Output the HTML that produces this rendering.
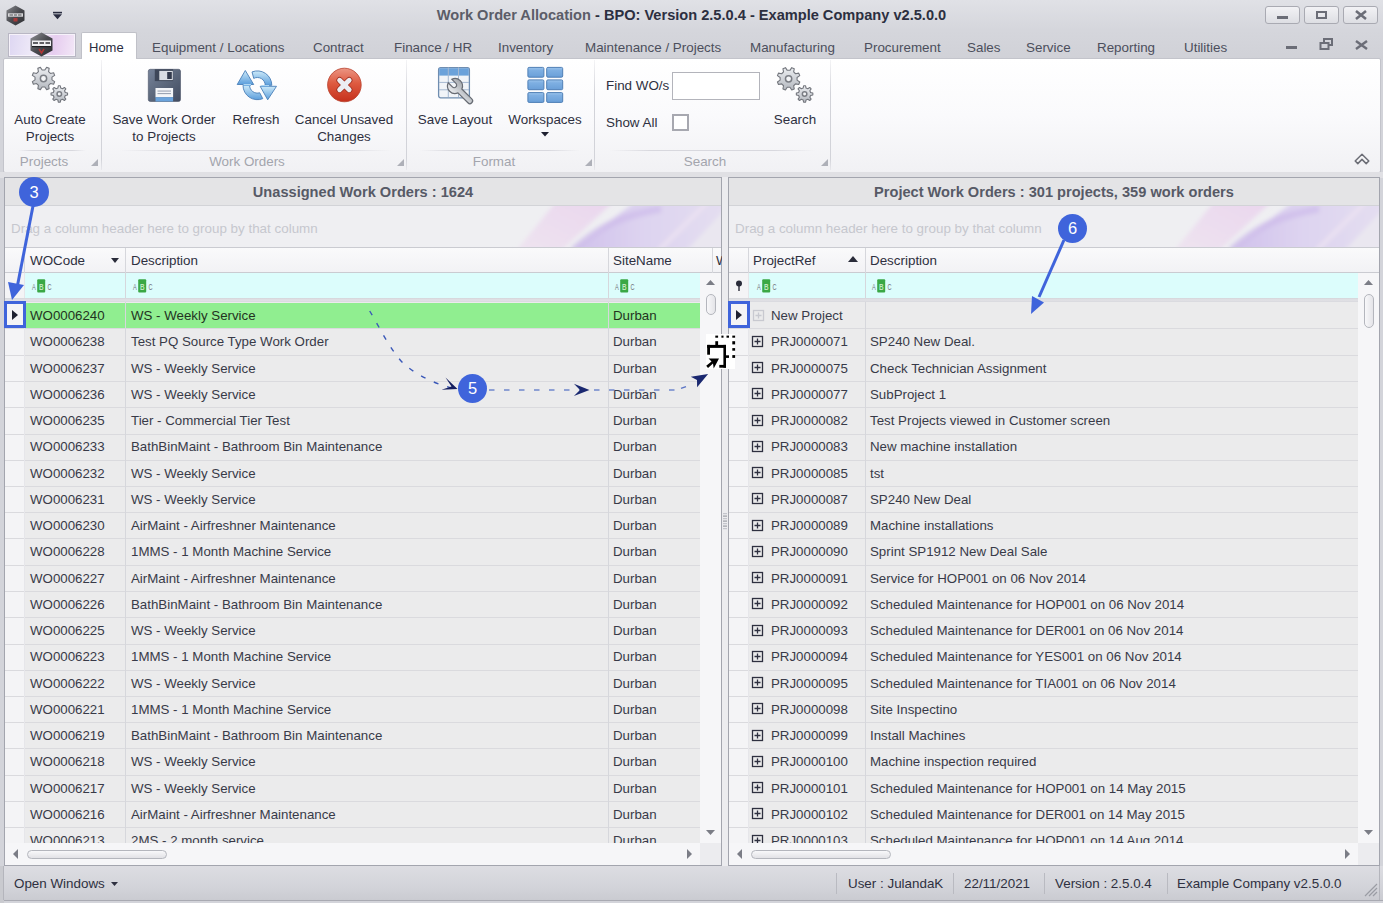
<!DOCTYPE html><html><head><meta charset="utf-8"><style>
html,body{margin:0;padding:0;}
body{width:1383px;height:903px;overflow:hidden;position:relative;background:#d3d4da;font-family:"Liberation Sans", sans-serif;}
.t{position:absolute;white-space:nowrap;line-height:1;}
.b{position:absolute;box-sizing:border-box;}
svg{position:absolute;overflow:visible;}
</style></head><body>
<div class="b" style="left:0px;top:0px;width:1383px;height:60px;background:linear-gradient(#e0e1e6 0px,#d5d6dc 30px,#d0d1d7 60px);"></div>
<svg style="left:6px;top:5px" width="19" height="21" viewBox="0 0 19 21"><defs><linearGradient id="hx" x1="0" y1="0" x2="1" y2="1"><stop offset="0" stop-color="#8a8b90"/><stop offset="0.5" stop-color="#4a4b50"/><stop offset="1" stop-color="#2e2f33"/></linearGradient></defs><polygon points="9.5,0.5 18.5,5.5 18.5,15.5 9.5,20.5 0.5,15.5 0.5,5.5" fill="url(#hx)"/><rect x="2" y="8.3" width="15" height="3.4" fill="#d8d8da"/><path d="M3.5,10 H7 M8,10 H11 M12,10 H15.5" stroke="#55565a" stroke-width="1"/><rect x="7.5" y="13" width="4" height="3.5" fill="#a83a3a"/></svg>
<svg style="left:53px;top:11px" width="10" height="10" viewBox="0 0 10 10"><rect x="0" y="0.8" width="9" height="1.6" fill="#2a2d40"/><polygon points="0,3.2 9,3.2 4.5,8.3" fill="#2a2d40"/></svg>
<div class="t" style="left:0;width:1383px;text-align:center;top:8px;font-size:14.6px;font-weight:bold;color:#5b5d68;"><span>Work Order Allocation</span><span style="color:#2c2f40"> - BPO: Version 2.5.0.4 - Example Company v2.5.0.0</span></div>
<div class="b" style="left:1265px;top:6px;width:35px;height:18px;border:1px solid #a9aab2;border-radius:3px;background:linear-gradient(#f2f2f5,#dddee3);"></div>
<div class="b" style="left:1277px;top:16px;width:11px;height:3px;background:#6b6d77;"></div>
<div class="b" style="left:1304px;top:6px;width:35px;height:18px;border:1px solid #a9aab2;border-radius:3px;background:linear-gradient(#f2f2f5,#dddee3);"></div>
<div class="b" style="left:1316px;top:10.5px;width:11px;height:8.5px;border:2px solid #6b6d77;"></div>
<div class="b" style="left:1343px;top:6px;width:35px;height:18px;border:1px solid #a9aab2;border-radius:3px;background:linear-gradient(#f2f2f5,#dddee3);"></div>
<svg style="left:1355px;top:10px" width="12" height="10" viewBox="0 0 12 10"><path d="M1,1 L11,9 M11,1 L1,9" stroke="#6b6d77" stroke-width="2.6"/></svg>
<div class="b" style="left:8px;top:33px;width:68px;height:24px;border:1px solid #b9b7c4;box-shadow:inset 0 0 0 1px #f6f2fa;background:linear-gradient(100deg,#ddd6f2 0%,#efeaf8 38%,#e6cdef 68%,#f3e8f7 100%);"></div>
<svg style="left:30px;top:32px" width="23" height="25" viewBox="0 0 23 25"><defs><linearGradient id="hx2" x1="0" y1="0" x2="1" y2="1"><stop offset="0" stop-color="#909196"/><stop offset="0.5" stop-color="#4a4b50"/><stop offset="1" stop-color="#2a2b2f"/></linearGradient></defs><polygon points="11.5,0.5 22.5,6.5 22.5,18.5 11.5,24.5 0.5,18.5 0.5,6.5" fill="url(#hx2)"/><rect x="2" y="8.5" width="19" height="5.5" fill="#f0f0f2"/><path d="M3,11 H8 M9.5,11 H14 M15.5,11 H20" stroke="#303136" stroke-width="1.4"/><rect x="2" y="14" width="19" height="1.2" fill="#1e1f22"/><path d="M9,17 L11.5,21 L14,17" fill="none" stroke="#b03535" stroke-width="1.6"/></svg>
<div class="b" style="left:81px;top:32px;width:56px;height:28px;background:#fff;border:1px solid #c0c1c8;border-bottom:none;border-radius:2px 2px 0 0;"></div>
<div class="t" style="left:89px;top:41px;font-size:13px;color:#2a2d40;font-weight:normal;">Home</div>
<div class="t" style="left:152px;top:41px;font-size:13.4px;color:#4c4f5c;font-weight:normal;">Equipment / Locations</div>
<div class="t" style="left:313px;top:41px;font-size:13.4px;color:#4c4f5c;font-weight:normal;">Contract</div>
<div class="t" style="left:394px;top:41px;font-size:13.4px;color:#4c4f5c;font-weight:normal;">Finance / HR</div>
<div class="t" style="left:498px;top:41px;font-size:13.4px;color:#4c4f5c;font-weight:normal;">Inventory</div>
<div class="t" style="left:585px;top:41px;font-size:13.4px;color:#4c4f5c;font-weight:normal;">Maintenance / Projects</div>
<div class="t" style="left:750px;top:41px;font-size:13.4px;color:#4c4f5c;font-weight:normal;">Manufacturing</div>
<div class="t" style="left:864px;top:41px;font-size:13.4px;color:#4c4f5c;font-weight:normal;">Procurement</div>
<div class="t" style="left:967px;top:41px;font-size:13.4px;color:#4c4f5c;font-weight:normal;">Sales</div>
<div class="t" style="left:1026px;top:41px;font-size:13.4px;color:#4c4f5c;font-weight:normal;">Service</div>
<div class="t" style="left:1097px;top:41px;font-size:13.4px;color:#4c4f5c;font-weight:normal;">Reporting</div>
<div class="t" style="left:1184px;top:41px;font-size:13.4px;color:#4c4f5c;font-weight:normal;">Utilities</div>
<div class="b" style="left:1286px;top:46px;width:11px;height:3px;background:#6b6d77;"></div>
<svg style="left:1319px;top:38px" width="15" height="13" viewBox="0 0 15 13"><rect x="5" y="1" width="8" height="6" fill="none" stroke="#6b6d77" stroke-width="2"/><rect x="1.5" y="5" width="8" height="6" fill="#d2d3d9" stroke="#6b6d77" stroke-width="2"/></svg>
<svg style="left:1355px;top:40px" width="13" height="10" viewBox="0 0 13 10"><path d="M1,1 L12,9 M12,1 L1,9" stroke="#6b6d77" stroke-width="2.4"/></svg>
<div class="b" style="left:3px;top:58px;width:1378px;height:115px;background:linear-gradient(#ffffff 0%,#fafafc 50%,#f1f1f4 100%);border:1px solid #c3c4cb;border-radius:2px;"></div>
<div class="b" style="left:82px;top:57px;width:54px;height:3px;background:#fff;"></div>
<div class="b" style="left:101px;top:60px;width:1px;height:110px;background:linear-gradient(#f4f4f6,#d2d3d9 30%,#d2d3d9 90%,#e8e8ec);"></div>
<div class="b" style="left:406px;top:60px;width:1px;height:110px;background:linear-gradient(#f4f4f6,#d2d3d9 30%,#d2d3d9 90%,#e8e8ec);"></div>
<div class="b" style="left:594px;top:60px;width:1px;height:110px;background:linear-gradient(#f4f4f6,#d2d3d9 30%,#d2d3d9 90%,#e8e8ec);"></div>
<div class="b" style="left:830px;top:60px;width:1px;height:110px;background:linear-gradient(#f4f4f6,#d2d3d9 30%,#d2d3d9 90%,#e8e8ec);"></div>
<div class="b" style="left:18px;top:150px;width:68px;height:1px;background:linear-gradient(90deg,rgba(215,215,222,0),#d8d8de 20%,#d8d8de 80%,rgba(215,215,222,0));"></div>
<div class="b" style="left:120px;top:150px;width:272px;height:1px;background:linear-gradient(90deg,rgba(215,215,222,0),#d8d8de 20%,#d8d8de 80%,rgba(215,215,222,0));"></div>
<div class="b" style="left:420px;top:150px;width:160px;height:1px;background:linear-gradient(90deg,rgba(215,215,222,0),#d8d8de 20%,#d8d8de 80%,rgba(215,215,222,0));"></div>
<div class="b" style="left:610px;top:150px;width:205px;height:1px;background:linear-gradient(90deg,rgba(215,215,222,0),#d8d8de 20%,#d8d8de 80%,rgba(215,215,222,0));"></div>
<div class="t" style="left:-256px;width:600px;text-align:center;top:155px;font-size:13.4px;color:#a3a5ad;font-weight:normal;">Projects</div>
<div class="t" style="left:-53px;width:600px;text-align:center;top:155px;font-size:13.4px;color:#a3a5ad;font-weight:normal;">Work Orders</div>
<div class="t" style="left:194px;width:600px;text-align:center;top:155px;font-size:13.4px;color:#a3a5ad;font-weight:normal;">Format</div>
<div class="t" style="left:405px;width:600px;text-align:center;top:155px;font-size:13.4px;color:#a3a5ad;font-weight:normal;">Search</div>
<svg style="left:91px;top:159px" width="7" height="7" viewBox="0 0 7 7"><polygon points="7,0 7,7 0,7" fill="#aeb0b8"/></svg>
<svg style="left:397px;top:159px" width="7" height="7" viewBox="0 0 7 7"><polygon points="7,0 7,7 0,7" fill="#aeb0b8"/></svg>
<svg style="left:585px;top:159px" width="7" height="7" viewBox="0 0 7 7"><polygon points="7,0 7,7 0,7" fill="#aeb0b8"/></svg>
<svg style="left:821px;top:159px" width="7" height="7" viewBox="0 0 7 7"><polygon points="7,0 7,7 0,7" fill="#aeb0b8"/></svg>
<div class="t" style="left:-250px;width:600px;text-align:center;top:113px;font-size:13.4px;color:#2e3040;font-weight:normal;">Auto Create</div>
<div class="t" style="left:-250px;width:600px;text-align:center;top:130px;font-size:13.4px;color:#2e3040;font-weight:normal;">Projects</div>
<div class="t" style="left:-136px;width:600px;text-align:center;top:113px;font-size:13.4px;color:#2e3040;font-weight:normal;">Save Work Order</div>
<div class="t" style="left:-136px;width:600px;text-align:center;top:130px;font-size:13.4px;color:#2e3040;font-weight:normal;">to Projects</div>
<div class="t" style="left:-44px;width:600px;text-align:center;top:113px;font-size:13.4px;color:#2e3040;font-weight:normal;">Refresh</div>
<div class="t" style="left:44px;width:600px;text-align:center;top:113px;font-size:13.4px;color:#2e3040;font-weight:normal;">Cancel Unsaved</div>
<div class="t" style="left:44px;width:600px;text-align:center;top:130px;font-size:13.4px;color:#2e3040;font-weight:normal;">Changes</div>
<div class="t" style="left:155px;width:600px;text-align:center;top:113px;font-size:13.4px;color:#2e3040;font-weight:normal;">Save Layout</div>
<div class="t" style="left:245px;width:600px;text-align:center;top:113px;font-size:13.4px;color:#2e3040;font-weight:normal;">Workspaces</div>
<svg style="left:541px;top:132px" width="8" height="5" viewBox="0 0 8 5"><polygon points="0,0 8,0 4,4.5" fill="#1e2030"/></svg>
<div class="t" style="left:606px;top:79px;font-size:13.4px;color:#2e3040;font-weight:normal;">Find WO/s</div>
<div class="b" style="left:672px;top:72px;width:88px;height:28px;background:#fff;border:1px solid #b3b4bb;"></div>
<div class="t" style="left:606px;top:116px;font-size:13.4px;color:#2e3040;font-weight:normal;">Show All</div>
<div class="b" style="left:672px;top:114px;width:17px;height:17px;background:#fff;border:2px solid #a7a8b0;"></div>
<div class="t" style="left:495px;width:600px;text-align:center;top:113px;font-size:13.4px;color:#2e3040;font-weight:normal;">Search</div>
<svg style="left:1354px;top:152px" width="17" height="14" viewBox="0 0 17 14"><path d="M1.2,9 L8,2.2 L14.8,9 L12.2,11.6 L8,7.4 L3.8,11.6 Z" fill="#f4f4f6" stroke="#6c6e76" stroke-width="1.5" stroke-linejoin="round"/></svg>
<svg style="left:30px;top:65px" width="40" height="40" viewBox="0 0 40 40"><defs><linearGradient id="gg" x1="0" y1="0" x2="0" y2="1"><stop offset="0" stop-color="#eceef1"/><stop offset="1" stop-color="#b4b8bf"/></linearGradient></defs><polygon points="14.84,5.02 16.65,2.34 19.17,3.38 18.55,6.56 20.44,8.45 23.62,7.83 24.66,10.35 21.98,12.16 21.98,14.84 24.66,16.65 23.62,19.17 20.44,18.55 18.55,20.44 19.17,23.62 16.65,24.66 14.84,21.98 12.16,21.98 10.35,24.66 7.83,23.62 8.45,20.44 6.56,18.55 3.38,19.17 2.34,16.65 5.02,14.84 5.02,12.16 2.34,10.35 3.38,7.83 6.56,8.45 8.45,6.56 7.83,3.38 10.35,2.34 12.16,5.02" fill="url(#gg)" stroke="#73767d" stroke-width="1.1" stroke-linejoin="round"/><circle cx="13.5" cy="13.5" r="3.13" fill="#f4f5f7" stroke="#7a7d84" stroke-width="1.5"/><polygon points="27.87,23.03 28.32,20.76 30.28,20.76 30.73,23.03 32.51,23.76 34.44,22.48 35.82,23.86 34.54,25.79 35.27,27.57 37.54,28.02 37.54,29.98 35.27,30.43 34.54,32.21 35.82,34.14 34.44,35.52 32.51,34.24 30.73,34.97 30.28,37.24 28.32,37.24 27.87,34.97 26.09,34.24 24.16,35.52 22.78,34.14 24.06,32.21 23.33,30.43 21.06,29.98 21.06,28.02 23.33,27.57 24.06,25.79 22.78,23.86 24.16,22.48 26.09,23.76" fill="url(#gg)" stroke="#73767d" stroke-width="1.1" stroke-linejoin="round"/><circle cx="29.3" cy="29" r="2.24" fill="#f4f5f7" stroke="#7a7d84" stroke-width="1.5"/></svg>
<svg style="left:775px;top:65px" width="40" height="40" viewBox="0 0 40 40"><defs><linearGradient id="gg" x1="0" y1="0" x2="0" y2="1"><stop offset="0" stop-color="#eceef1"/><stop offset="1" stop-color="#b4b8bf"/></linearGradient></defs><polygon points="14.94,5.32 16.75,2.64 19.27,3.68 18.65,6.86 20.54,8.75 23.72,8.13 24.76,10.65 22.08,12.46 22.08,15.14 24.76,16.95 23.72,19.47 20.54,18.85 18.65,20.74 19.27,23.92 16.75,24.96 14.94,22.28 12.26,22.28 10.45,24.96 7.93,23.92 8.55,20.74 6.66,18.85 3.48,19.47 2.44,16.95 5.12,15.14 5.12,12.46 2.44,10.65 3.48,8.13 6.66,8.75 8.55,6.86 7.93,3.68 10.45,2.64 12.26,5.32" fill="url(#gg)" stroke="#73767d" stroke-width="1.1" stroke-linejoin="round"/><circle cx="13.6" cy="13.8" r="3.13" fill="#f4f5f7" stroke="#7a7d84" stroke-width="1.5"/><polygon points="28.17,23.03 28.62,20.76 30.58,20.76 31.03,23.03 32.81,23.76 34.74,22.48 36.12,23.86 34.84,25.79 35.57,27.57 37.84,28.02 37.84,29.98 35.57,30.43 34.84,32.21 36.12,34.14 34.74,35.52 32.81,34.24 31.03,34.97 30.58,37.24 28.62,37.24 28.17,34.97 26.39,34.24 24.46,35.52 23.08,34.14 24.36,32.21 23.63,30.43 21.36,29.98 21.36,28.02 23.63,27.57 24.36,25.79 23.08,23.86 24.46,22.48 26.39,23.76" fill="url(#gg)" stroke="#73767d" stroke-width="1.1" stroke-linejoin="round"/><circle cx="29.6" cy="29" r="2.24" fill="#f4f5f7" stroke="#7a7d84" stroke-width="1.5"/></svg>
<svg style="left:148px;top:69px" width="34" height="33" viewBox="0 0 34 33"><defs><linearGradient id="fg" x1="0" y1="0" x2="1" y2="1"><stop offset="0" stop-color="#76839a"/><stop offset="0.5" stop-color="#5b677b"/><stop offset="1" stop-color="#414b60"/></linearGradient></defs><rect x="0.3" y="0.3" width="32.2" height="32.2" rx="2" fill="url(#fg)" stroke="#4a5366" stroke-width="0.6"/><rect x="6.8" y="0.3" width="18.3" height="11.8" fill="#3e4759"/><rect x="11.3" y="1.9" width="13.5" height="9.2" fill="#d9dde3"/><rect x="19.2" y="3" width="4.6" height="7" fill="#323a4c"/><rect x="7.5" y="19" width="17.6" height="9.3" fill="#f3f5f8"/><rect x="7.5" y="28.2" width="17.6" height="4.3" fill="#6aa3dc"/><rect x="9.5" y="21.6" width="13.5" height="0.9" fill="#8792a4"/><rect x="9.5" y="24.2" width="13.5" height="0.9" fill="#8792a4"/></svg>
<svg style="left:235px;top:69px" width="44" height="33" viewBox="0 0 44 33"><defs><linearGradient id="rg" x1="0" y1="0" x2="0" y2="1"><stop offset="0" stop-color="#cdeaf9"/><stop offset="1" stop-color="#5b9edc"/></linearGradient></defs><g fill="url(#rg)" stroke="#4a7fb8" stroke-width="0.9" stroke-linejoin="round"><path d="M17.01,2.95 A14.4,14.4 0 0 1 36.80,16.30 L30.20,16.30 A7.8,7.8 0 0 0 18.74,9.41 Z"/><path d="M25.2,17.3 L41.5,17.3 L32.7,30.8 Z"/><path d="M8.00,16.30 A14.4,14.4 0 0 0 27.79,29.65 L24.68,23.76 A7.8,7.8 0 0 1 14.60,16.30 Z"/><path d="M2.2,15.5 L10.3,1.5 L18.7,15.5 Z"/></g><g fill="url(#rg)"><path d="M26.3,17.8 L34,17.8 L34,16 L26.3,16 Z"/><path d="M8.5,15 L16,15 L16,17 L8.5,17 Z"/></g></svg>
<svg style="left:327px;top:68px" width="36" height="36" viewBox="0 0 36 36"><defs><linearGradient id="cg" x1="0" y1="0" x2="0" y2="1"><stop offset="0" stop-color="#eb9583"/><stop offset="0.45" stop-color="#de5a40"/><stop offset="1" stop-color="#c5301c"/></linearGradient></defs><circle cx="17.4" cy="17" r="16.8" fill="url(#cg)" stroke="#b8402c" stroke-width="0.8"/><path d="M12.6,12.2 L22.2,21.8 M22.2,12.2 L12.6,21.8" stroke="#a03020" stroke-width="6.4" stroke-linecap="round"/><path d="M12.6,12.2 L22.2,21.8 M22.2,12.2 L12.6,21.8" stroke="#eceef3" stroke-width="4.8" stroke-linecap="round"/></svg>
<svg style="left:437px;top:66px" width="44" height="44" viewBox="0 0 44 44"><defs><linearGradient id="wg" x1="0" y1="0" x2="1" y2="0"><stop offset="0" stop-color="#eceef1"/><stop offset="1" stop-color="#a4a8ae"/></linearGradient></defs><rect x="1.6" y="1.6" width="30.8" height="30.2" rx="2" fill="#f1f4f8" stroke="#6f8db0" stroke-width="1.3"/><rect x="2.2" y="2.2" width="29.6" height="7.4" fill="#6ba2da"/><path d="M11.3,1.5 V31 M21.5,1.5 V31 M2,16.4 H32 M2,23.8 H32" stroke="#a5b8d0" stroke-width="1"/><path transform="translate(18,20) rotate(-45)" d="M-2.5,-7.07 L-2.5,-1.2 A2.5,2.5 0 0 0 2.5,-1.2 L2.5,-7.07 A7.5,7.5 0 0 1 2.75,6.98 L2.75,21 A2.75,2.75 0 0 1 -2.75,21 L-2.75,6.98 A7.5,7.5 0 0 1 -2.5,-7.07 Z" fill="url(#wg)" stroke="#676b73" stroke-width="1.2"/></svg>
<svg style="left:527px;top:66px" width="37" height="38" viewBox="0 0 37 38"><defs><linearGradient id="wsg" x1="0" y1="0" x2="0" y2="1"><stop offset="0" stop-color="#9cc4ec"/><stop offset="0.3" stop-color="#7eafe2"/><stop offset="1" stop-color="#6a9fd8"/></linearGradient></defs><rect x="0.9" y="1.4" width="16" height="9.8" rx="1.2" fill="url(#wsg)" stroke="#4f7fb6" stroke-width="1"/><rect x="19.7" y="1.4" width="16" height="9.8" rx="1.2" fill="url(#wsg)" stroke="#4f7fb6" stroke-width="1"/><rect x="0.9" y="13.9" width="16" height="9.8" rx="1.2" fill="url(#wsg)" stroke="#4f7fb6" stroke-width="1"/><rect x="19.7" y="13.9" width="16" height="9.8" rx="1.2" fill="url(#wsg)" stroke="#4f7fb6" stroke-width="1"/><rect x="0.9" y="26.6" width="16" height="9.8" rx="1.2" fill="url(#wsg)" stroke="#4f7fb6" stroke-width="1"/><rect x="19.7" y="26.6" width="16" height="9.8" rx="1.2" fill="url(#wsg)" stroke="#4f7fb6" stroke-width="1"/></svg>
<div class="b" style="left:0px;top:172px;width:1383px;height:6px;background:#e0e0e4;"></div>
<div class="b" style="left:4px;top:177px;width:718px;height:689px;background:#f4f4f6;border:1px solid #a3a5ae;"></div>
<div class="b" style="left:5px;top:178px;width:716px;height:28px;background:#e4e4e6;border-bottom:1px solid #d2d3d7;"></div>
<div class="t" style="left:63.0px;width:600px;text-align:center;top:185px;font-size:14.6px;color:#575a66;font-weight:bold;">Unassigned Work Orders : 1624</div>
<div class="b" style="left:5px;top:206px;width:716px;height:42px;background:#efeff2;border-bottom:1px solid #cacbd1;"></div>
<svg style="left:5px;top:206px" width="716" height="41" viewBox="0 0 716 41"><defs><clipPath id="cpL"><rect x="0" y="0" width="716" height="41"/></clipPath><filter id="blL" x="-50%" y="-50%" width="200%" height="200%"><feGaussianBlur stdDeviation="2"/></filter><linearGradient id="pkL" x1="0" y1="1" x2="1" y2="0"><stop offset="0" stop-color="#eee4f0"/><stop offset="1" stop-color="#ead6ee"/></linearGradient><linearGradient id="pgL" x1="0" y1="0" x2="1" y2="0"><stop offset="0" stop-color="#cfc0eb"/><stop offset="0.45" stop-color="#ddd3f0"/><stop offset="1" stop-color="#e4def0"/></linearGradient></defs><g clip-path="url(#cpL)"><g filter="url(#blL)"><polygon points="511,45 556,45 608,-4 551,-4" fill="url(#pkL)"/><polygon points="566,45 630,-4 722,-4 722,45" fill="url(#pgL)"/><path d="M568,44 C591,23 616,9 656,3" fill="none" stroke="#cdbbe9" stroke-width="7" opacity="0.7"/><path d="M654,44 L702,-3" fill="none" stroke="#ebe2f2" stroke-width="4"/><polygon points="681,45 722,45 722,1" fill="#eae7f0"/></g></g></svg>
<div class="t" style="left:11px;top:222px;font-size:13.4px;color:#c6c7ce;font-weight:normal;">Drag a column header here to group by that column</div>
<div class="b" style="left:5px;top:248px;width:716px;height:25px;background:linear-gradient(#fafafb,#f2f2f5);border-bottom:1px solid #cacbd1;"></div>
<div class="b" style="left:5px;top:273px;width:695px;height:25px;background:#dcfdfc;"></div>
<div class="b" style="left:5px;top:302px;width:695px;height:541px;background:#ebebec;"></div>
<div class="b" style="left:5px;top:302px;width:20px;height:541px;background:#f4f4f6;"></div>
<div class="b" style="left:700px;top:273px;width:21px;height:570px;background:#f6f6f8;"></div>
<div class="b" style="left:700px;top:843px;width:21px;height:22px;background:#ececef;"></div>
<div class="b" style="left:5px;top:843px;width:695px;height:22px;background:#f6f6f8;"></div>
<div class="b" style="left:5px;top:273px;width:20px;height:25px;background:#f4f4f6;"></div>
<div class="b" style="left:5px;top:302px;width:695px;height:541px;overflow:hidden;">
<div class="b" style="left:20px;top:0.5px;width:675px;height:26.5px;background:#90ee90;"></div>
<div class="b" style="left:0;top:26px;width:695px;height:1px;background:#dadade;"></div>
<div class="t" style="left:25px;top:7.2px;font-size:13.3px;color:#23331f;">WO0006240</div>
<div class="t" style="left:126px;top:7.2px;font-size:13.3px;color:#23331f;">WS - Weekly Service</div>
<div class="t" style="left:608px;top:7.2px;font-size:13.3px;color:#23331f;">Durban</div>
<div class="b" style="left:0;top:53px;width:695px;height:1px;background:#dadade;"></div>
<div class="t" style="left:25px;top:33.45px;font-size:13.3px;color:#383a48;">WO0006238</div>
<div class="t" style="left:126px;top:33.45px;font-size:13.3px;color:#383a48;">Test PQ Source Type Work Order</div>
<div class="t" style="left:608px;top:33.45px;font-size:13.3px;color:#383a48;">Durban</div>
<div class="b" style="left:0;top:79px;width:695px;height:1px;background:#dadade;"></div>
<div class="t" style="left:25px;top:59.7px;font-size:13.3px;color:#383a48;">WO0006237</div>
<div class="t" style="left:126px;top:59.7px;font-size:13.3px;color:#383a48;">WS - Weekly Service</div>
<div class="t" style="left:608px;top:59.7px;font-size:13.3px;color:#383a48;">Durban</div>
<div class="b" style="left:0;top:105px;width:695px;height:1px;background:#dadade;"></div>
<div class="t" style="left:25px;top:85.95px;font-size:13.3px;color:#383a48;">WO0006236</div>
<div class="t" style="left:126px;top:85.95px;font-size:13.3px;color:#383a48;">WS - Weekly Service</div>
<div class="t" style="left:608px;top:85.95px;font-size:13.3px;color:#383a48;">Durban</div>
<div class="b" style="left:0;top:132px;width:695px;height:1px;background:#dadade;"></div>
<div class="t" style="left:25px;top:112.2px;font-size:13.3px;color:#383a48;">WO0006235</div>
<div class="t" style="left:126px;top:112.2px;font-size:13.3px;color:#383a48;">Tier - Commercial Tier Test</div>
<div class="t" style="left:608px;top:112.2px;font-size:13.3px;color:#383a48;">Durban</div>
<div class="b" style="left:0;top:158px;width:695px;height:1px;background:#dadade;"></div>
<div class="t" style="left:25px;top:138.45px;font-size:13.3px;color:#383a48;">WO0006233</div>
<div class="t" style="left:126px;top:138.45px;font-size:13.3px;color:#383a48;">BathBinMaint - Bathroom Bin Maintenance</div>
<div class="t" style="left:608px;top:138.45px;font-size:13.3px;color:#383a48;">Durban</div>
<div class="b" style="left:0;top:184px;width:695px;height:1px;background:#dadade;"></div>
<div class="t" style="left:25px;top:164.7px;font-size:13.3px;color:#383a48;">WO0006232</div>
<div class="t" style="left:126px;top:164.7px;font-size:13.3px;color:#383a48;">WS - Weekly Service</div>
<div class="t" style="left:608px;top:164.7px;font-size:13.3px;color:#383a48;">Durban</div>
<div class="b" style="left:0;top:210px;width:695px;height:1px;background:#dadade;"></div>
<div class="t" style="left:25px;top:190.95px;font-size:13.3px;color:#383a48;">WO0006231</div>
<div class="t" style="left:126px;top:190.95px;font-size:13.3px;color:#383a48;">WS - Weekly Service</div>
<div class="t" style="left:608px;top:190.95px;font-size:13.3px;color:#383a48;">Durban</div>
<div class="b" style="left:0;top:236px;width:695px;height:1px;background:#dadade;"></div>
<div class="t" style="left:25px;top:217.2px;font-size:13.3px;color:#383a48;">WO0006230</div>
<div class="t" style="left:126px;top:217.2px;font-size:13.3px;color:#383a48;">AirMaint - Airfreshner Maintenance</div>
<div class="t" style="left:608px;top:217.2px;font-size:13.3px;color:#383a48;">Durban</div>
<div class="b" style="left:0;top:263px;width:695px;height:1px;background:#dadade;"></div>
<div class="t" style="left:25px;top:243.45px;font-size:13.3px;color:#383a48;">WO0006228</div>
<div class="t" style="left:126px;top:243.45px;font-size:13.3px;color:#383a48;">1MMS - 1 Month Machine Service</div>
<div class="t" style="left:608px;top:243.45px;font-size:13.3px;color:#383a48;">Durban</div>
<div class="b" style="left:0;top:289px;width:695px;height:1px;background:#dadade;"></div>
<div class="t" style="left:25px;top:269.7px;font-size:13.3px;color:#383a48;">WO0006227</div>
<div class="t" style="left:126px;top:269.7px;font-size:13.3px;color:#383a48;">AirMaint - Airfreshner Maintenance</div>
<div class="t" style="left:608px;top:269.7px;font-size:13.3px;color:#383a48;">Durban</div>
<div class="b" style="left:0;top:315px;width:695px;height:1px;background:#dadade;"></div>
<div class="t" style="left:25px;top:295.95px;font-size:13.3px;color:#383a48;">WO0006226</div>
<div class="t" style="left:126px;top:295.95px;font-size:13.3px;color:#383a48;">BathBinMaint - Bathroom Bin Maintenance</div>
<div class="t" style="left:608px;top:295.95px;font-size:13.3px;color:#383a48;">Durban</div>
<div class="b" style="left:0;top:342px;width:695px;height:1px;background:#dadade;"></div>
<div class="t" style="left:25px;top:322.2px;font-size:13.3px;color:#383a48;">WO0006225</div>
<div class="t" style="left:126px;top:322.2px;font-size:13.3px;color:#383a48;">WS - Weekly Service</div>
<div class="t" style="left:608px;top:322.2px;font-size:13.3px;color:#383a48;">Durban</div>
<div class="b" style="left:0;top:368px;width:695px;height:1px;background:#dadade;"></div>
<div class="t" style="left:25px;top:348.45px;font-size:13.3px;color:#383a48;">WO0006223</div>
<div class="t" style="left:126px;top:348.45px;font-size:13.3px;color:#383a48;">1MMS - 1 Month Machine Service</div>
<div class="t" style="left:608px;top:348.45px;font-size:13.3px;color:#383a48;">Durban</div>
<div class="b" style="left:0;top:394px;width:695px;height:1px;background:#dadade;"></div>
<div class="t" style="left:25px;top:374.7px;font-size:13.3px;color:#383a48;">WO0006222</div>
<div class="t" style="left:126px;top:374.7px;font-size:13.3px;color:#383a48;">WS - Weekly Service</div>
<div class="t" style="left:608px;top:374.7px;font-size:13.3px;color:#383a48;">Durban</div>
<div class="b" style="left:0;top:420px;width:695px;height:1px;background:#dadade;"></div>
<div class="t" style="left:25px;top:400.95px;font-size:13.3px;color:#383a48;">WO0006221</div>
<div class="t" style="left:126px;top:400.95px;font-size:13.3px;color:#383a48;">1MMS - 1 Month Machine Service</div>
<div class="t" style="left:608px;top:400.95px;font-size:13.3px;color:#383a48;">Durban</div>
<div class="b" style="left:0;top:446px;width:695px;height:1px;background:#dadade;"></div>
<div class="t" style="left:25px;top:427.2px;font-size:13.3px;color:#383a48;">WO0006219</div>
<div class="t" style="left:126px;top:427.2px;font-size:13.3px;color:#383a48;">BathBinMaint - Bathroom Bin Maintenance</div>
<div class="t" style="left:608px;top:427.2px;font-size:13.3px;color:#383a48;">Durban</div>
<div class="b" style="left:0;top:473px;width:695px;height:1px;background:#dadade;"></div>
<div class="t" style="left:25px;top:453.45px;font-size:13.3px;color:#383a48;">WO0006218</div>
<div class="t" style="left:126px;top:453.45px;font-size:13.3px;color:#383a48;">WS - Weekly Service</div>
<div class="t" style="left:608px;top:453.45px;font-size:13.3px;color:#383a48;">Durban</div>
<div class="b" style="left:0;top:499px;width:695px;height:1px;background:#dadade;"></div>
<div class="t" style="left:25px;top:479.7px;font-size:13.3px;color:#383a48;">WO0006217</div>
<div class="t" style="left:126px;top:479.7px;font-size:13.3px;color:#383a48;">WS - Weekly Service</div>
<div class="t" style="left:608px;top:479.7px;font-size:13.3px;color:#383a48;">Durban</div>
<div class="b" style="left:0;top:525px;width:695px;height:1px;background:#dadade;"></div>
<div class="t" style="left:25px;top:505.95px;font-size:13.3px;color:#383a48;">WO0006216</div>
<div class="t" style="left:126px;top:505.95px;font-size:13.3px;color:#383a48;">AirMaint - Airfreshner Maintenance</div>
<div class="t" style="left:608px;top:505.95px;font-size:13.3px;color:#383a48;">Durban</div>
<div class="b" style="left:0;top:552px;width:695px;height:1px;background:#dadade;"></div>
<div class="t" style="left:25px;top:532.2px;font-size:13.3px;color:#383a48;">WO0006213</div>
<div class="t" style="left:126px;top:532.2px;font-size:13.3px;color:#383a48;">2MS - 2 month service</div>
<div class="t" style="left:608px;top:532.2px;font-size:13.3px;color:#383a48;">Durban</div>
</div>
<div class="b" style="left:125px;top:248px;width:1px;height:595px;background:#d6d7dc;"></div>
<div class="b" style="left:608px;top:248px;width:1px;height:595px;background:#d6d7dc;"></div>
<div class="b" style="left:712px;top:248px;width:1px;height:25px;background:#d6d7dc;"></div>
<div class="b" style="left:24px;top:248px;width:1px;height:25px;background:#d6d7dc;"></div>
<div class="b" style="left:24px;top:273px;width:1px;height:570px;background:#e6e6ea;"></div>
<div class="b" style="left:5px;top:298px;width:695px;height:4px;background:linear-gradient(#d4d5da,#e2e2e6 50%,#d8d9de);"></div>
<div class="t" style="left:30px;top:254px;font-size:13.4px;color:#2e3040;font-weight:normal;">WOCode</div>
<div class="t" style="left:131px;top:254px;font-size:13.4px;color:#2e3040;font-weight:normal;">Description</div>
<div class="t" style="left:613px;top:254px;font-size:13.4px;color:#2e3040;font-weight:normal;">SiteName</div>
<div class="t" style="left:716px;top:254px;font-size:13.4px;color:#2e3040;font-weight:normal;">W</div>
<svg style="left:31px;top:281px" width="20" height="11" viewBox="0 0 20 11"><g font-family="Liberation Sans" font-size="9" transform="scale(0.62,1)"><text x="1.5" y="9.3" fill="#70727a">A</text><text x="26.5" y="9.3" fill="#70727a">C</text></g><rect x="6.2" y="-1.8" width="8" height="13.3" rx="1" fill="#3aa845"/><g transform="scale(0.75,1)"><text x="13.6" y="9" text-anchor="middle" font-family="Liberation Sans" font-weight="bold" font-size="8.5" fill="#bfe6bf">B</text></g></svg>
<svg style="left:132px;top:281px" width="20" height="11" viewBox="0 0 20 11"><g font-family="Liberation Sans" font-size="9" transform="scale(0.62,1)"><text x="1.5" y="9.3" fill="#70727a">A</text><text x="26.5" y="9.3" fill="#70727a">C</text></g><rect x="6.2" y="-1.8" width="8" height="13.3" rx="1" fill="#3aa845"/><g transform="scale(0.75,1)"><text x="13.6" y="9" text-anchor="middle" font-family="Liberation Sans" font-weight="bold" font-size="8.5" fill="#bfe6bf">B</text></g></svg>
<svg style="left:614px;top:281px" width="20" height="11" viewBox="0 0 20 11"><g font-family="Liberation Sans" font-size="9" transform="scale(0.62,1)"><text x="1.5" y="9.3" fill="#70727a">A</text><text x="26.5" y="9.3" fill="#70727a">C</text></g><rect x="6.2" y="-1.8" width="8" height="13.3" rx="1" fill="#3aa845"/><g transform="scale(0.75,1)"><text x="13.6" y="9" text-anchor="middle" font-family="Liberation Sans" font-weight="bold" font-size="8.5" fill="#bfe6bf">B</text></g></svg>
<svg style="left:706px;top:280px" width="9" height="5" viewBox="0 0 9 5"><polygon points="0,5 9,5 4.5,0" fill="#7b7d86"/></svg>
<div class="b" style="left:706px;top:294px;width:10px;height:21px;border:1px solid #b4b6bd;border-radius:5px;background:linear-gradient(90deg,#f8f8fa,#e4e4e8);"></div>
<svg style="left:706px;top:830px" width="9" height="5" viewBox="0 0 9 5"><polygon points="0,0 9,0 4.5,5" fill="#7b7d86"/></svg>
<svg style="left:13px;top:849px" width="5" height="10" viewBox="0 0 5 10"><polygon points="5,0 5,10 0,5" fill="#7b7d86"/></svg>
<div class="b" style="left:27px;top:850px;width:140px;height:9px;border:1px solid #b4b6bd;border-radius:5px;background:linear-gradient(#f8f8fa,#e2e2e6);"></div>
<svg style="left:687px;top:849px" width="5" height="10" viewBox="0 0 5 10"><polygon points="0,0 0,10 5,5" fill="#7b7d86"/></svg>
<svg style="left:12px;top:310px" width="6" height="10" viewBox="0 0 6 10"><polygon points="0,0 6,5 0,10" fill="#1e2030"/></svg>
<svg style="left:111px;top:258px" width="8" height="5" viewBox="0 0 8 5"><polygon points="0,0 8,0 4,5" fill="#2a2c3a"/></svg>
<div class="b" style="left:728px;top:177px;width:652px;height:689px;background:#f4f4f6;border:1px solid #a3a5ae;"></div>
<div class="b" style="left:729px;top:178px;width:650px;height:28px;background:#e4e4e6;border-bottom:1px solid #d2d3d7;"></div>
<div class="t" style="left:754.0px;width:600px;text-align:center;top:185px;font-size:14.6px;color:#575a66;font-weight:bold;">Project Work Orders : 301 projects, 359 work orders</div>
<div class="b" style="left:729px;top:206px;width:650px;height:42px;background:#efeff2;border-bottom:1px solid #cacbd1;"></div>
<svg style="left:729px;top:206px" width="650" height="41" viewBox="0 0 650 41"><defs><clipPath id="cpR"><rect x="0" y="0" width="650" height="41"/></clipPath><filter id="blR" x="-50%" y="-50%" width="200%" height="200%"><feGaussianBlur stdDeviation="2"/></filter><linearGradient id="pkR" x1="0" y1="1" x2="1" y2="0"><stop offset="0" stop-color="#eee4f0"/><stop offset="1" stop-color="#ead6ee"/></linearGradient><linearGradient id="pgR" x1="0" y1="0" x2="1" y2="0"><stop offset="0" stop-color="#cfc0eb"/><stop offset="0.45" stop-color="#ddd3f0"/><stop offset="1" stop-color="#e4def0"/></linearGradient></defs><g clip-path="url(#cpR)"><g filter="url(#blR)"><polygon points="445,45 490,45 542,-4 485,-4" fill="url(#pkR)"/><polygon points="500,45 564,-4 656,-4 656,45" fill="url(#pgR)"/><path d="M502,44 C525,23 550,9 590,3" fill="none" stroke="#cdbbe9" stroke-width="7" opacity="0.7"/><path d="M588,44 L636,-3" fill="none" stroke="#ebe2f2" stroke-width="4"/><polygon points="615,45 656,45 656,1" fill="#eae7f0"/></g></g></svg>
<div class="t" style="left:735px;top:222px;font-size:13.4px;color:#c6c7ce;font-weight:normal;">Drag a column header here to group by that column</div>
<div class="b" style="left:729px;top:248px;width:650px;height:25px;background:linear-gradient(#fafafb,#f2f2f5);border-bottom:1px solid #cacbd1;"></div>
<div class="b" style="left:729px;top:273px;width:629px;height:25px;background:#dcfdfc;"></div>
<div class="b" style="left:729px;top:302px;width:629px;height:541px;background:#ebebec;"></div>
<div class="b" style="left:729px;top:302px;width:20px;height:541px;background:#f4f4f6;"></div>
<div class="b" style="left:1358px;top:273px;width:21px;height:570px;background:#f6f6f8;"></div>
<div class="b" style="left:1358px;top:843px;width:21px;height:22px;background:#ececef;"></div>
<div class="b" style="left:729px;top:843px;width:629px;height:22px;background:#f6f6f8;"></div>
<div class="b" style="left:729px;top:273px;width:20px;height:25px;background:#f4f4f6;"></div>
<div class="b" style="left:729px;top:302px;width:629px;height:541px;overflow:hidden;">
<div class="b" style="left:0;top:26px;width:629px;height:1px;background:#dadade;"></div>
<div class="t" style="left:42px;top:7.2px;font-size:13.3px;color:#383a48;">New Project</div>
<svg style="left:24px;top:7.5px" width="11" height="11"><rect x="0.5" y="0.5" width="10" height="10" fill="none" stroke="#c8c9d0" stroke-width="1.3"/><path d="M2.5,5.5 H8.5 M5.5,2.5 V8.5" stroke="#c8c9d0" stroke-width="1.3"/></svg>
<div class="b" style="left:0;top:53px;width:629px;height:1px;background:#dadade;"></div>
<div class="t" style="left:42px;top:33.45px;font-size:13.3px;color:#383a48;">PRJ0000071</div>
<div class="t" style="left:141px;top:33.45px;font-size:13.3px;color:#383a48;">SP240 New Deal.</div>
<svg style="left:23px;top:33.75px" width="11" height="11"><rect x="0.5" y="0.5" width="10" height="10" fill="none" stroke="#2e3040" stroke-width="1.3"/><path d="M2.5,5.5 H8.5 M5.5,2.5 V8.5" stroke="#2e3040" stroke-width="1.3"/></svg>
<div class="b" style="left:0;top:79px;width:629px;height:1px;background:#dadade;"></div>
<div class="t" style="left:42px;top:59.7px;font-size:13.3px;color:#383a48;">PRJ0000075</div>
<div class="t" style="left:141px;top:59.7px;font-size:13.3px;color:#383a48;">Check Technician Assignment</div>
<svg style="left:23px;top:60.0px" width="11" height="11"><rect x="0.5" y="0.5" width="10" height="10" fill="none" stroke="#2e3040" stroke-width="1.3"/><path d="M2.5,5.5 H8.5 M5.5,2.5 V8.5" stroke="#2e3040" stroke-width="1.3"/></svg>
<div class="b" style="left:0;top:105px;width:629px;height:1px;background:#dadade;"></div>
<div class="t" style="left:42px;top:85.95px;font-size:13.3px;color:#383a48;">PRJ0000077</div>
<div class="t" style="left:141px;top:85.95px;font-size:13.3px;color:#383a48;">SubProject 1</div>
<svg style="left:23px;top:86.25px" width="11" height="11"><rect x="0.5" y="0.5" width="10" height="10" fill="none" stroke="#2e3040" stroke-width="1.3"/><path d="M2.5,5.5 H8.5 M5.5,2.5 V8.5" stroke="#2e3040" stroke-width="1.3"/></svg>
<div class="b" style="left:0;top:132px;width:629px;height:1px;background:#dadade;"></div>
<div class="t" style="left:42px;top:112.2px;font-size:13.3px;color:#383a48;">PRJ0000082</div>
<div class="t" style="left:141px;top:112.2px;font-size:13.3px;color:#383a48;">Test Projects viewed in Customer screen</div>
<svg style="left:23px;top:112.5px" width="11" height="11"><rect x="0.5" y="0.5" width="10" height="10" fill="none" stroke="#2e3040" stroke-width="1.3"/><path d="M2.5,5.5 H8.5 M5.5,2.5 V8.5" stroke="#2e3040" stroke-width="1.3"/></svg>
<div class="b" style="left:0;top:158px;width:629px;height:1px;background:#dadade;"></div>
<div class="t" style="left:42px;top:138.45px;font-size:13.3px;color:#383a48;">PRJ0000083</div>
<div class="t" style="left:141px;top:138.45px;font-size:13.3px;color:#383a48;">New machine installation</div>
<svg style="left:23px;top:138.75px" width="11" height="11"><rect x="0.5" y="0.5" width="10" height="10" fill="none" stroke="#2e3040" stroke-width="1.3"/><path d="M2.5,5.5 H8.5 M5.5,2.5 V8.5" stroke="#2e3040" stroke-width="1.3"/></svg>
<div class="b" style="left:0;top:184px;width:629px;height:1px;background:#dadade;"></div>
<div class="t" style="left:42px;top:164.7px;font-size:13.3px;color:#383a48;">PRJ0000085</div>
<div class="t" style="left:141px;top:164.7px;font-size:13.3px;color:#383a48;">tst</div>
<svg style="left:23px;top:165.0px" width="11" height="11"><rect x="0.5" y="0.5" width="10" height="10" fill="none" stroke="#2e3040" stroke-width="1.3"/><path d="M2.5,5.5 H8.5 M5.5,2.5 V8.5" stroke="#2e3040" stroke-width="1.3"/></svg>
<div class="b" style="left:0;top:210px;width:629px;height:1px;background:#dadade;"></div>
<div class="t" style="left:42px;top:190.95px;font-size:13.3px;color:#383a48;">PRJ0000087</div>
<div class="t" style="left:141px;top:190.95px;font-size:13.3px;color:#383a48;">SP240 New Deal</div>
<svg style="left:23px;top:191.25px" width="11" height="11"><rect x="0.5" y="0.5" width="10" height="10" fill="none" stroke="#2e3040" stroke-width="1.3"/><path d="M2.5,5.5 H8.5 M5.5,2.5 V8.5" stroke="#2e3040" stroke-width="1.3"/></svg>
<div class="b" style="left:0;top:236px;width:629px;height:1px;background:#dadade;"></div>
<div class="t" style="left:42px;top:217.2px;font-size:13.3px;color:#383a48;">PRJ0000089</div>
<div class="t" style="left:141px;top:217.2px;font-size:13.3px;color:#383a48;">Machine installations</div>
<svg style="left:23px;top:217.5px" width="11" height="11"><rect x="0.5" y="0.5" width="10" height="10" fill="none" stroke="#2e3040" stroke-width="1.3"/><path d="M2.5,5.5 H8.5 M5.5,2.5 V8.5" stroke="#2e3040" stroke-width="1.3"/></svg>
<div class="b" style="left:0;top:263px;width:629px;height:1px;background:#dadade;"></div>
<div class="t" style="left:42px;top:243.45px;font-size:13.3px;color:#383a48;">PRJ0000090</div>
<div class="t" style="left:141px;top:243.45px;font-size:13.3px;color:#383a48;">Sprint SP1912 New Deal Sale</div>
<svg style="left:23px;top:243.75px" width="11" height="11"><rect x="0.5" y="0.5" width="10" height="10" fill="none" stroke="#2e3040" stroke-width="1.3"/><path d="M2.5,5.5 H8.5 M5.5,2.5 V8.5" stroke="#2e3040" stroke-width="1.3"/></svg>
<div class="b" style="left:0;top:289px;width:629px;height:1px;background:#dadade;"></div>
<div class="t" style="left:42px;top:269.7px;font-size:13.3px;color:#383a48;">PRJ0000091</div>
<div class="t" style="left:141px;top:269.7px;font-size:13.3px;color:#383a48;">Service for HOP001 on 06 Nov 2014</div>
<svg style="left:23px;top:270.0px" width="11" height="11"><rect x="0.5" y="0.5" width="10" height="10" fill="none" stroke="#2e3040" stroke-width="1.3"/><path d="M2.5,5.5 H8.5 M5.5,2.5 V8.5" stroke="#2e3040" stroke-width="1.3"/></svg>
<div class="b" style="left:0;top:315px;width:629px;height:1px;background:#dadade;"></div>
<div class="t" style="left:42px;top:295.95px;font-size:13.3px;color:#383a48;">PRJ0000092</div>
<div class="t" style="left:141px;top:295.95px;font-size:13.3px;color:#383a48;">Scheduled Maintenance for HOP001 on 06 Nov 2014</div>
<svg style="left:23px;top:296.25px" width="11" height="11"><rect x="0.5" y="0.5" width="10" height="10" fill="none" stroke="#2e3040" stroke-width="1.3"/><path d="M2.5,5.5 H8.5 M5.5,2.5 V8.5" stroke="#2e3040" stroke-width="1.3"/></svg>
<div class="b" style="left:0;top:342px;width:629px;height:1px;background:#dadade;"></div>
<div class="t" style="left:42px;top:322.2px;font-size:13.3px;color:#383a48;">PRJ0000093</div>
<div class="t" style="left:141px;top:322.2px;font-size:13.3px;color:#383a48;">Scheduled Maintenance for DER001 on 06 Nov 2014</div>
<svg style="left:23px;top:322.5px" width="11" height="11"><rect x="0.5" y="0.5" width="10" height="10" fill="none" stroke="#2e3040" stroke-width="1.3"/><path d="M2.5,5.5 H8.5 M5.5,2.5 V8.5" stroke="#2e3040" stroke-width="1.3"/></svg>
<div class="b" style="left:0;top:368px;width:629px;height:1px;background:#dadade;"></div>
<div class="t" style="left:42px;top:348.45px;font-size:13.3px;color:#383a48;">PRJ0000094</div>
<div class="t" style="left:141px;top:348.45px;font-size:13.3px;color:#383a48;">Scheduled Maintenance for YES001 on 06 Nov 2014</div>
<svg style="left:23px;top:348.75px" width="11" height="11"><rect x="0.5" y="0.5" width="10" height="10" fill="none" stroke="#2e3040" stroke-width="1.3"/><path d="M2.5,5.5 H8.5 M5.5,2.5 V8.5" stroke="#2e3040" stroke-width="1.3"/></svg>
<div class="b" style="left:0;top:394px;width:629px;height:1px;background:#dadade;"></div>
<div class="t" style="left:42px;top:374.7px;font-size:13.3px;color:#383a48;">PRJ0000095</div>
<div class="t" style="left:141px;top:374.7px;font-size:13.3px;color:#383a48;">Scheduled Maintenance for TIA001 on 06 Nov 2014</div>
<svg style="left:23px;top:375.0px" width="11" height="11"><rect x="0.5" y="0.5" width="10" height="10" fill="none" stroke="#2e3040" stroke-width="1.3"/><path d="M2.5,5.5 H8.5 M5.5,2.5 V8.5" stroke="#2e3040" stroke-width="1.3"/></svg>
<div class="b" style="left:0;top:420px;width:629px;height:1px;background:#dadade;"></div>
<div class="t" style="left:42px;top:400.95px;font-size:13.3px;color:#383a48;">PRJ0000098</div>
<div class="t" style="left:141px;top:400.95px;font-size:13.3px;color:#383a48;">Site Inspectino</div>
<svg style="left:23px;top:401.25px" width="11" height="11"><rect x="0.5" y="0.5" width="10" height="10" fill="none" stroke="#2e3040" stroke-width="1.3"/><path d="M2.5,5.5 H8.5 M5.5,2.5 V8.5" stroke="#2e3040" stroke-width="1.3"/></svg>
<div class="b" style="left:0;top:446px;width:629px;height:1px;background:#dadade;"></div>
<div class="t" style="left:42px;top:427.2px;font-size:13.3px;color:#383a48;">PRJ0000099</div>
<div class="t" style="left:141px;top:427.2px;font-size:13.3px;color:#383a48;">Install Machines</div>
<svg style="left:23px;top:427.5px" width="11" height="11"><rect x="0.5" y="0.5" width="10" height="10" fill="none" stroke="#2e3040" stroke-width="1.3"/><path d="M2.5,5.5 H8.5 M5.5,2.5 V8.5" stroke="#2e3040" stroke-width="1.3"/></svg>
<div class="b" style="left:0;top:473px;width:629px;height:1px;background:#dadade;"></div>
<div class="t" style="left:42px;top:453.45px;font-size:13.3px;color:#383a48;">PRJ0000100</div>
<div class="t" style="left:141px;top:453.45px;font-size:13.3px;color:#383a48;">Machine inspection required</div>
<svg style="left:23px;top:453.75px" width="11" height="11"><rect x="0.5" y="0.5" width="10" height="10" fill="none" stroke="#2e3040" stroke-width="1.3"/><path d="M2.5,5.5 H8.5 M5.5,2.5 V8.5" stroke="#2e3040" stroke-width="1.3"/></svg>
<div class="b" style="left:0;top:499px;width:629px;height:1px;background:#dadade;"></div>
<div class="t" style="left:42px;top:479.7px;font-size:13.3px;color:#383a48;">PRJ0000101</div>
<div class="t" style="left:141px;top:479.7px;font-size:13.3px;color:#383a48;">Scheduled Maintenance for HOP001 on 14 May 2015</div>
<svg style="left:23px;top:480.0px" width="11" height="11"><rect x="0.5" y="0.5" width="10" height="10" fill="none" stroke="#2e3040" stroke-width="1.3"/><path d="M2.5,5.5 H8.5 M5.5,2.5 V8.5" stroke="#2e3040" stroke-width="1.3"/></svg>
<div class="b" style="left:0;top:525px;width:629px;height:1px;background:#dadade;"></div>
<div class="t" style="left:42px;top:505.95px;font-size:13.3px;color:#383a48;">PRJ0000102</div>
<div class="t" style="left:141px;top:505.95px;font-size:13.3px;color:#383a48;">Scheduled Maintenance for DER001 on 14 May 2015</div>
<svg style="left:23px;top:506.25px" width="11" height="11"><rect x="0.5" y="0.5" width="10" height="10" fill="none" stroke="#2e3040" stroke-width="1.3"/><path d="M2.5,5.5 H8.5 M5.5,2.5 V8.5" stroke="#2e3040" stroke-width="1.3"/></svg>
<div class="b" style="left:0;top:552px;width:629px;height:1px;background:#dadade;"></div>
<div class="t" style="left:42px;top:532.2px;font-size:13.3px;color:#383a48;">PRJ0000103</div>
<div class="t" style="left:141px;top:532.2px;font-size:13.3px;color:#383a48;">Scheduled Maintenance for HOP001 on 14 Aug 2014</div>
<svg style="left:23px;top:532.5px" width="11" height="11"><rect x="0.5" y="0.5" width="10" height="10" fill="none" stroke="#2e3040" stroke-width="1.3"/><path d="M2.5,5.5 H8.5 M5.5,2.5 V8.5" stroke="#2e3040" stroke-width="1.3"/></svg>
</div>
<div class="b" style="left:865px;top:248px;width:1px;height:595px;background:#d6d7dc;"></div>
<div class="b" style="left:748px;top:248px;width:1px;height:25px;background:#d6d7dc;"></div>
<div class="b" style="left:748px;top:273px;width:1px;height:570px;background:#e6e6ea;"></div>
<div class="b" style="left:729px;top:298px;width:629px;height:4px;background:linear-gradient(#d4d5da,#e2e2e6 50%,#d8d9de);"></div>
<div class="t" style="left:753px;top:254px;font-size:13.4px;color:#2e3040;font-weight:normal;">ProjectRef</div>
<div class="t" style="left:870px;top:254px;font-size:13.4px;color:#2e3040;font-weight:normal;">Description</div>
<svg style="left:756px;top:281px" width="20" height="11" viewBox="0 0 20 11"><g font-family="Liberation Sans" font-size="9" transform="scale(0.62,1)"><text x="1.5" y="9.3" fill="#70727a">A</text><text x="26.5" y="9.3" fill="#70727a">C</text></g><rect x="6.2" y="-1.8" width="8" height="13.3" rx="1" fill="#3aa845"/><g transform="scale(0.75,1)"><text x="13.6" y="9" text-anchor="middle" font-family="Liberation Sans" font-weight="bold" font-size="8.5" fill="#bfe6bf">B</text></g></svg>
<svg style="left:871px;top:281px" width="20" height="11" viewBox="0 0 20 11"><g font-family="Liberation Sans" font-size="9" transform="scale(0.62,1)"><text x="1.5" y="9.3" fill="#70727a">A</text><text x="26.5" y="9.3" fill="#70727a">C</text></g><rect x="6.2" y="-1.8" width="8" height="13.3" rx="1" fill="#3aa845"/><g transform="scale(0.75,1)"><text x="13.6" y="9" text-anchor="middle" font-family="Liberation Sans" font-weight="bold" font-size="8.5" fill="#bfe6bf">B</text></g></svg>
<svg style="left:1364px;top:280px" width="9" height="5" viewBox="0 0 9 5"><polygon points="0,5 9,5 4.5,0" fill="#7b7d86"/></svg>
<div class="b" style="left:1364px;top:294px;width:10px;height:34px;border:1px solid #b4b6bd;border-radius:5px;background:linear-gradient(90deg,#f8f8fa,#e4e4e8);"></div>
<svg style="left:1364px;top:830px" width="9" height="5" viewBox="0 0 9 5"><polygon points="0,0 9,0 4.5,5" fill="#7b7d86"/></svg>
<svg style="left:737px;top:849px" width="5" height="10" viewBox="0 0 5 10"><polygon points="5,0 5,10 0,5" fill="#7b7d86"/></svg>
<div class="b" style="left:751px;top:850px;width:140px;height:9px;border:1px solid #b4b6bd;border-radius:5px;background:linear-gradient(#f8f8fa,#e2e2e6);"></div>
<svg style="left:1345px;top:849px" width="5" height="10" viewBox="0 0 5 10"><polygon points="0,0 0,10 5,5" fill="#7b7d86"/></svg>
<svg style="left:736px;top:310px" width="6" height="10" viewBox="0 0 6 10"><polygon points="0,0 6,5 0,10" fill="#1e2030"/></svg>
<svg style="left:848px;top:256px" width="10" height="6" viewBox="0 0 10 6"><polygon points="0,6 10,6 5,0" fill="#2a2c3a"/></svg>
<svg style="left:735px;top:280px" width="8" height="12" viewBox="0 0 8 12"><circle cx="4" cy="3.5" r="3" fill="#2a2c3a"/><rect x="3.3" y="5" width="1.4" height="6" fill="#2a2c3a"/></svg>
<div class="b" style="left:722px;top:177px;width:6px;height:689px;background:#ececef;"></div>
<svg style="left:723px;top:513px" width="4" height="17" viewBox="0 0 4 17"><rect x="0" y="0.0" width="4" height="1.2" fill="#c4c5cc"/><rect x="0" y="2.5" width="4" height="1.2" fill="#9c9ea6"/><rect x="0" y="5.0" width="4" height="1.2" fill="#c4c5cc"/><rect x="0" y="7.5" width="4" height="1.2" fill="#9c9ea6"/><rect x="0" y="10.0" width="4" height="1.2" fill="#c4c5cc"/><rect x="0" y="12.5" width="4" height="1.2" fill="#9c9ea6"/><rect x="0" y="15.0" width="4" height="1.2" fill="#c4c5cc"/></svg>
<div class="b" style="left:0px;top:866px;width:1383px;height:37px;background:linear-gradient(#dddde2,#d2d3d9 60%,#cacbd1 92%,#a9aab2 92%,#a9aab2 95%,#d3d4da 95%);border-left:4px solid #c9cacf;"></div>
<div class="b" style="left:1379px;top:866px;width:1px;height:34px;background:#b4b5bc;"></div>
<div class="b" style="left:3px;top:866px;width:1px;height:34px;background:#b4b5bc;"></div>
<div class="t" style="left:14px;top:877px;font-size:13.4px;color:#2e3040;font-weight:normal;">Open Windows</div>
<svg style="left:111px;top:882px" width="7" height="5" viewBox="0 0 7 5"><polygon points="0,0 7,0 3.5,4" fill="#2e3040"/></svg>
<div class="b" style="left:836px;top:873px;width:1px;height:21px;background:#b9bac1;"></div>
<div class="b" style="left:953px;top:873px;width:1px;height:21px;background:#b9bac1;"></div>
<div class="b" style="left:1044px;top:873px;width:1px;height:21px;background:#b9bac1;"></div>
<div class="b" style="left:1167px;top:873px;width:1px;height:21px;background:#b9bac1;"></div>
<div class="t" style="left:848px;top:877px;font-size:13.4px;color:#2e3040;font-weight:normal;">User : JulandaK</div>
<div class="t" style="left:964px;top:877px;font-size:13.4px;color:#2e3040;font-weight:normal;">22/11/2021</div>
<div class="t" style="left:1055px;top:877px;font-size:13.4px;color:#2e3040;font-weight:normal;">Version : 2.5.0.4</div>
<div class="t" style="left:1177px;top:877px;font-size:13.4px;color:#2e3040;font-weight:normal;">Example Company v2.5.0.0</div>
<svg style="left:1364px;top:883px" width="14" height="14" viewBox="0 0 14 14"><path d="M13,1 L1,13 M13,5 L5,13 M13,9 L9,13" stroke="#9a9ca4" stroke-width="1.2"/></svg>
<div class="b" style="left:4px;top:301px;width:22px;height:27px;border:3px solid #3f64db;"></div>
<div class="b" style="left:728px;top:301px;width:22px;height:27px;border:3px solid #3f64db;"></div>
<svg style="left:0px;top:170px" width="60" height="140" viewBox="0 0 60 140"><line x1="33" y1="36" x2="17" y2="118" stroke="#3f64db" stroke-width="3"/><polygon points="12,130 8,112 24,115" fill="#3f64db"/></svg>
<svg style="left:1020px;top:220px" width="60" height="100" viewBox="0 0 60 100"><line x1="1064" y1="240" x2="1039" y2="297" transform="translate(-1020,-220)" stroke="#3f64db" stroke-width="3"/><polygon points="11,94 12,76 24,82.5" fill="#3f64db"/></svg>
<svg style="left:19px;top:177px" width="30" height="30" viewBox="0 0 30 30"><circle cx="15" cy="15" r="15" fill="#3f64db"/><text x="15" y="20.9" text-anchor="middle" font-family="Liberation Sans" font-size="16.5" fill="#fff">3</text></svg>
<svg style="left:1057.5px;top:213.5px" width="29.0" height="29.0" viewBox="0 0 29.0 29.0"><circle cx="14.5" cy="14.5" r="14.5" fill="#3f64db"/><text x="14.5" y="20.4" text-anchor="middle" font-family="Liberation Sans" font-size="16.5" fill="#fff">6</text></svg>
<svg style="left:360px;top:300px" width="400" height="100" viewBox="0 0 400 100"><path d="M9.7,11 C20,28 30,50 44,64 C60,78 80,85 92,88" fill="none" stroke="#3a58b8" stroke-width="1.4" stroke-dasharray="5,9"/><path d="M129,89.9 L320,89.9" fill="none" stroke="#7088cc" stroke-width="1.5" stroke-dasharray="5.5,9.5"/><path d="M321,88.4 L326,86.6" fill="none" stroke="#5a74c4" stroke-width="1.4"/><polygon points="97.5,89 85.5,77.5 91.5,86.5 81.5,89.8" fill="#141e60"/><polygon points="229.5,89.9 213.9,83.7 220,89.9 213.9,95.9" fill="#1a2870"/><polygon points="348.1,73.9 330.8,76.8 337,80 337.1,87.2" fill="#1a2870"/></svg>
<svg style="left:457.5px;top:373.5px" width="29.0" height="29.0" viewBox="0 0 29.0 29.0"><circle cx="14.5" cy="14.5" r="14.5" fill="#3f64db"/><text x="14.5" y="20.4" text-anchor="middle" font-family="Liberation Sans" font-size="16.5" fill="#fff">5</text></svg>
<div class="b" style="left:706px;top:334px;width:29px;height:35px;background:#fff;"></div>
<svg style="left:706px;top:334px" width="29" height="35" viewBox="0 0 29 35"><g fill="#000"><rect x="9.3" y="1.6" width="2.8" height="2.1"/><rect x="15.4" y="1.6" width="2.1" height="2.1"/><rect x="20.5" y="1.6" width="2.5" height="2.1"/><rect x="26.3" y="1.6" width="2.8" height="2.1"/><rect x="26.3" y="7.2" width="2.8" height="3.2"/><rect x="26.3" y="14.1" width="2.8" height="2.6"/><rect x="26.3" y="21.1" width="2.8" height="2.8"/><rect x="9.3" y="7.2" width="2.8" height="4"/><rect x="1.2" y="10.9" width="18.8" height="3"/><rect x="1.2" y="10.9" width="2.8" height="9.8"/><rect x="17.4" y="10.9" width="2.6" height="22.8"/><rect x="20" y="21.3" width="3" height="2.6"/><rect x="13.3" y="30.9" width="6.7" height="2.8"/><polygon points="13,24.4 2.6,24.4 5.5,27.6 0.2,31.8 2,34 7,29.5 7.7,34.6"/></g></svg>
</body></html>
